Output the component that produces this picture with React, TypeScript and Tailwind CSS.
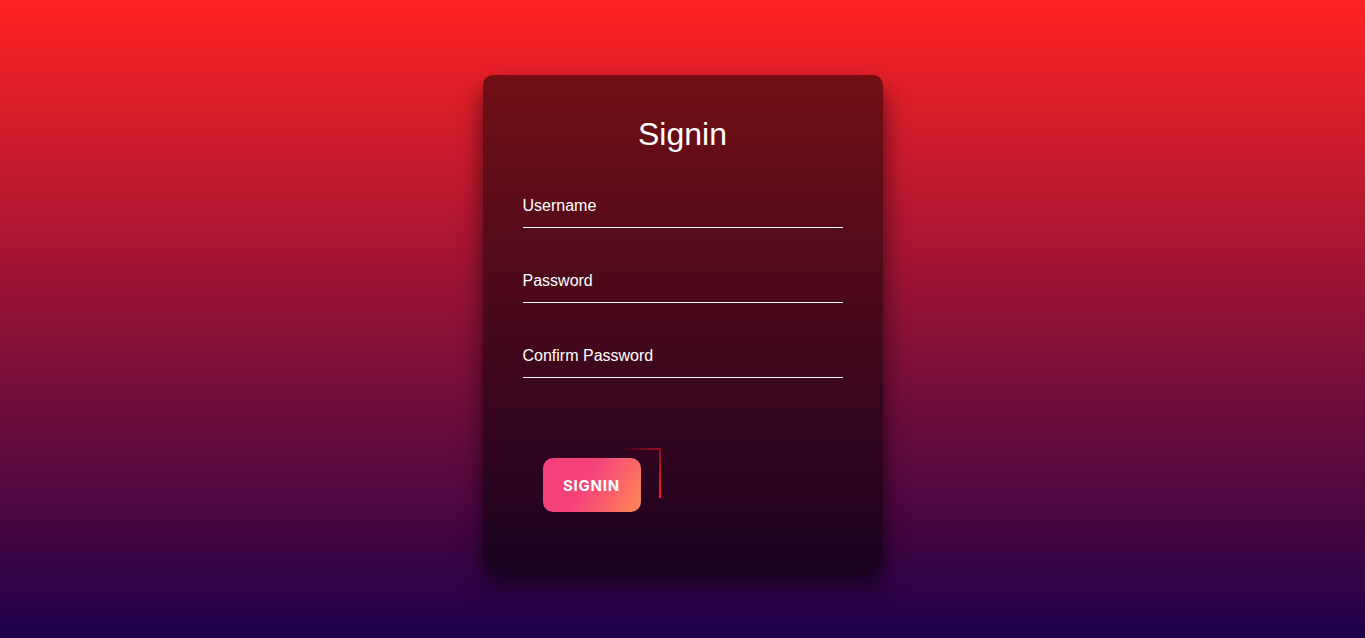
import React from "react";

function Field({ label }: { label: string }) {
  return (
    <div className="border-b border-white pb-[12px] pt-[1px]">
      <span className="block text-[16px] leading-[18px] text-white">{label}</span>
    </div>
  );
}

export default function App() {
  return (
    <div
      className="flex h-[638px] w-full items-start justify-center bg-[linear-gradient(180deg,#ff2323_0%,#1e004a_100%)] pt-[75px]"
      style={{ fontFamily: "Arial, 'Liberation Sans', sans-serif" }}
    >
      <div className="flex h-[494px] w-[400px] flex-col rounded-[10px] bg-black/50 px-[40px] pt-[41px] shadow-[0_15px_25px_rgba(0,0,0,0.6)]">
        <h2 className="text-center text-[32px] leading-[37px] text-white">Signin</h2>
        <div className="mt-[43px] flex flex-col gap-[43px]">
          <Field label="Username" />
          <Field label="Password" />
          <Field label="Confirm Password" />
        </div>
        <div className="relative mt-[70px] h-[64px] w-[160px]">
          <span className="absolute left-[97px] top-0 h-[2px] w-[41px] bg-[linear-gradient(90deg,transparent,#a0101e)]" />
          <span className="absolute left-[136px] top-0 h-[50px] w-[2px] bg-[linear-gradient(180deg,#8a1020,#ff1a1a)]" />
          <button
            className="absolute left-[20px] top-[10px] flex h-[54px] w-[98px] items-center justify-center rounded-[10px] bg-[linear-gradient(120deg,#f43f7b_0%,#f5447a_45%,#fe8855_100%)] pt-[2px] text-[15px] font-bold tracking-[0.8px] text-white"
            style={{ fontFamily: "Inter, 'Open Sans', sans-serif" }}
          >
            SIGNIN
          </button>
        </div>
      </div>
    </div>
  );
}
